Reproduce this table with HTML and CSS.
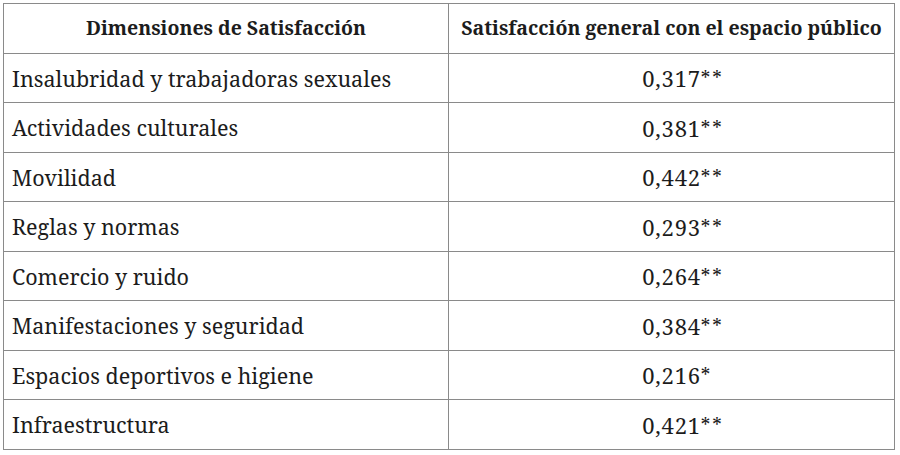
FILE: index.html
```html
<!DOCTYPE html>
<html>
<head>
<meta charset="utf-8">
<title>Dimensiones de Satisfacción</title>
<link rel="stylesheet" href="styles.css">
</head>
<body>
<table class="corr">
  <thead>
    <tr>
      <th class="dim">Dimensiones de Satisfacción</th>
      <th class="val">Satisfacción general con el espacio público</th>
    </tr>
  </thead>
  <tbody>
    <tr><td class="dim">Insalubridad y trabajadoras sexuales</td><td class="val"><span class="num">0,317</span><span class="sig">**</span></td></tr>
    <tr><td class="dim">Actividades culturales</td><td class="val"><span class="num">0,381</span><span class="sig">**</span></td></tr>
    <tr><td class="dim">Movilidad</td><td class="val"><span class="num">0,442</span><span class="sig">**</span></td></tr>
    <tr><td class="dim">Reglas y normas</td><td class="val"><span class="num">0,293</span><span class="sig">**</span></td></tr>
    <tr><td class="dim">Comercio y ruido</td><td class="val"><span class="num">0,264</span><span class="sig">**</span></td></tr>
    <tr><td class="dim">Manifestaciones y seguridad</td><td class="val"><span class="num">0,384</span><span class="sig">**</span></td></tr>
    <tr><td class="dim">Espacios deportivos e higiene</td><td class="val"><span class="num">0,216</span><span class="sig">*</span></td></tr>
    <tr><td class="dim">Infraestructura</td><td class="val"><span class="num">0,421</span><span class="sig">**</span></td></tr>
  </tbody>
</table>
</body>
</html>
```
FILE: styles.css
```css
html, body {
  margin: 0;
  padding: 0;
  background: #ffffff;
}
body {
  padding: 3px 0 0 3px;
  font-family: "Noto Serif", "Liberation Serif", serif;
}
.corr {
  border-collapse: collapse;
  width: 892px;
  table-layout: fixed;
  color: #1c1c1c;
}
.corr th,
.corr td {
  border: 1px solid #8a8a8a;
  height: 49.5px;
  padding: 0 8px;
  font-family: "Noto Serif", "Liberation Serif", serif;
  vertical-align: middle;
  box-sizing: border-box;
  white-space: nowrap;
}
.corr th {
  font-weight: bold;
  text-align: center;
  font-size: 19.5px;
  padding-bottom: 2px;
}
.corr th.dim { width: 445px; }
.corr td.dim {
  text-align: left;
  font-size: 21.5px;
  padding-top: 1px;
}
.corr td.val {
  text-align: center;
  font-size: 22px;
  padding-top: 1px;
}
.num {
  letter-spacing: 0.8px;
}
.sig {
  display: inline-block;
  width: 0;
  font-size: 19px;
  letter-spacing: 2px;
  vertical-align: 2px;
}
```
